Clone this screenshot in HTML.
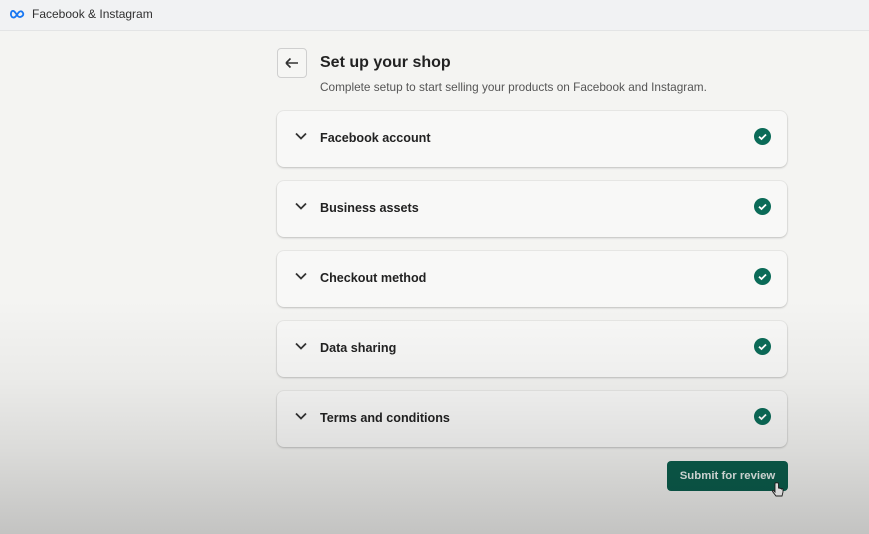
<!DOCTYPE html>
<html><head><style>
body{margin:0;width:869px;height:534px;overflow:hidden;font-family:"Liberation Sans",sans-serif;background:#f4f4f2;position:relative}
.top{position:absolute;left:0;top:0;width:869px;height:30px;background:#f1f2f3;border-bottom:1px solid #e3e4e5}
.top span{position:absolute;left:32px;top:7px;font-size:12px;color:#303030}
.back{position:absolute;left:277px;top:48px;width:28px;height:28px;border:1px solid #cfcfcf;border-radius:4px;background:#f6f6f4}
h1{position:absolute;left:320px;top:54px;margin:0;font-size:16px;font-weight:bold;color:#222}
.sub{position:absolute;left:320px;top:80px;font-size:11.8px;color:#555}
.card{position:absolute;left:277px;width:510px;height:56px;background:#f8f8f7;border-radius:7px;box-shadow:0 1px 2px rgba(0,0,0,.18),0 0 0 1px rgba(0,0,0,.04)}
.card b{position:absolute;left:43px;top:20px;font-size:12.6px;color:#222}
.card svg.c{position:absolute;left:18px;top:21px}
.card .ok{position:absolute;left:477px;top:17px;width:17px;height:17px;border-radius:50%;background:#0b6b58}
.btn{position:absolute;left:667px;top:461px;width:121px;height:30px;background:#0b5e4d;border-radius:4px;color:#e8f0ee;font-size:11.4px;font-weight:bold;text-align:center;line-height:30px}
.shade{position:absolute;left:0;top:0;width:869px;height:534px;pointer-events:none;background:linear-gradient(to bottom,rgba(0,0,0,0) 0,rgba(0,0,0,0) 300px,rgba(0,0,0,.04) 380px,rgba(0,0,0,.1) 450px,rgba(0,0,0,.2) 534px)}
</style></head><body>
<div class="top"><svg style="position:absolute;left:10px;top:9px" width="15" height="10" viewBox="0 0 15 10"><path d="M2 8C0 6 1 1 3.5 2S7 8 9.5 8 14 6 13 4 10 1 7.5 5 3.5 9 2 8Z" fill="none" stroke="#1877f2" stroke-width="1.8"/></svg><span>Facebook &amp; Instagram</span></div>
<div class="back"><svg width="28" height="28" viewBox="0 0 28 28"><path d="M8 14H20M8 14L12.5 9.5M8 14L12.5 18.5" stroke="#333" stroke-width="1.6" fill="none"/></svg></div>
<h1>Set up your shop</h1>
<div class="sub">Complete setup to start selling your products on Facebook and Instagram.</div>
<div class="card" style="top:111px"><svg class="c" width="12" height="8" viewBox="0 0 12 8"><path d="M1 1.5L6 6.5 11 1.5" stroke="#333" stroke-width="1.8" fill="none"/></svg><b>Facebook account</b><div class="ok"><svg width="17" height="17"><path d="M5 8.7L7.5 11 12 6.5" stroke="#fff" stroke-width="1.8" fill="none"/></svg></div></div>
<div class="card" style="top:181px"><svg class="c" width="12" height="8" viewBox="0 0 12 8"><path d="M1 1.5L6 6.5 11 1.5" stroke="#333" stroke-width="1.8" fill="none"/></svg><b>Business assets</b><div class="ok"><svg width="17" height="17"><path d="M5 8.7L7.5 11 12 6.5" stroke="#fff" stroke-width="1.8" fill="none"/></svg></div></div>
<div class="card" style="top:251px"><svg class="c" width="12" height="8" viewBox="0 0 12 8"><path d="M1 1.5L6 6.5 11 1.5" stroke="#333" stroke-width="1.8" fill="none"/></svg><b>Checkout method</b><div class="ok"><svg width="17" height="17"><path d="M5 8.7L7.5 11 12 6.5" stroke="#fff" stroke-width="1.8" fill="none"/></svg></div></div>
<div class="card" style="top:321px"><svg class="c" width="12" height="8" viewBox="0 0 12 8"><path d="M1 1.5L6 6.5 11 1.5" stroke="#333" stroke-width="1.8" fill="none"/></svg><b>Data sharing</b><div class="ok"><svg width="17" height="17"><path d="M5 8.7L7.5 11 12 6.5" stroke="#fff" stroke-width="1.8" fill="none"/></svg></div></div>
<div class="card" style="top:391px"><svg class="c" width="12" height="8" viewBox="0 0 12 8"><path d="M1 1.5L6 6.5 11 1.5" stroke="#333" stroke-width="1.8" fill="none"/></svg><b>Terms and conditions</b><div class="ok"><svg width="17" height="17"><path d="M5 8.7L7.5 11 12 6.5" stroke="#fff" stroke-width="1.8" fill="none"/></svg></div></div>
<div class="btn">Submit for review</div>
<svg style="position:absolute;left:772px;top:482px" width="12" height="16" viewBox="0 0 12 16"><path d="M3 1.5V10L1.5 8.5C.5 8 0 9 .8 9.8L4 14H10L11 10V7.5C11 6.5 9.5 6.5 9.5 7.5 9.5 6 8 6 8 7 8 5.5 6.5 5.5 6.5 6.5V1.5C6.5 .5 3 .5 3 1.5Z" fill="#fff" stroke="#222" stroke-width=".9"/></svg>
<div class="shade"></div>
</body></html>
